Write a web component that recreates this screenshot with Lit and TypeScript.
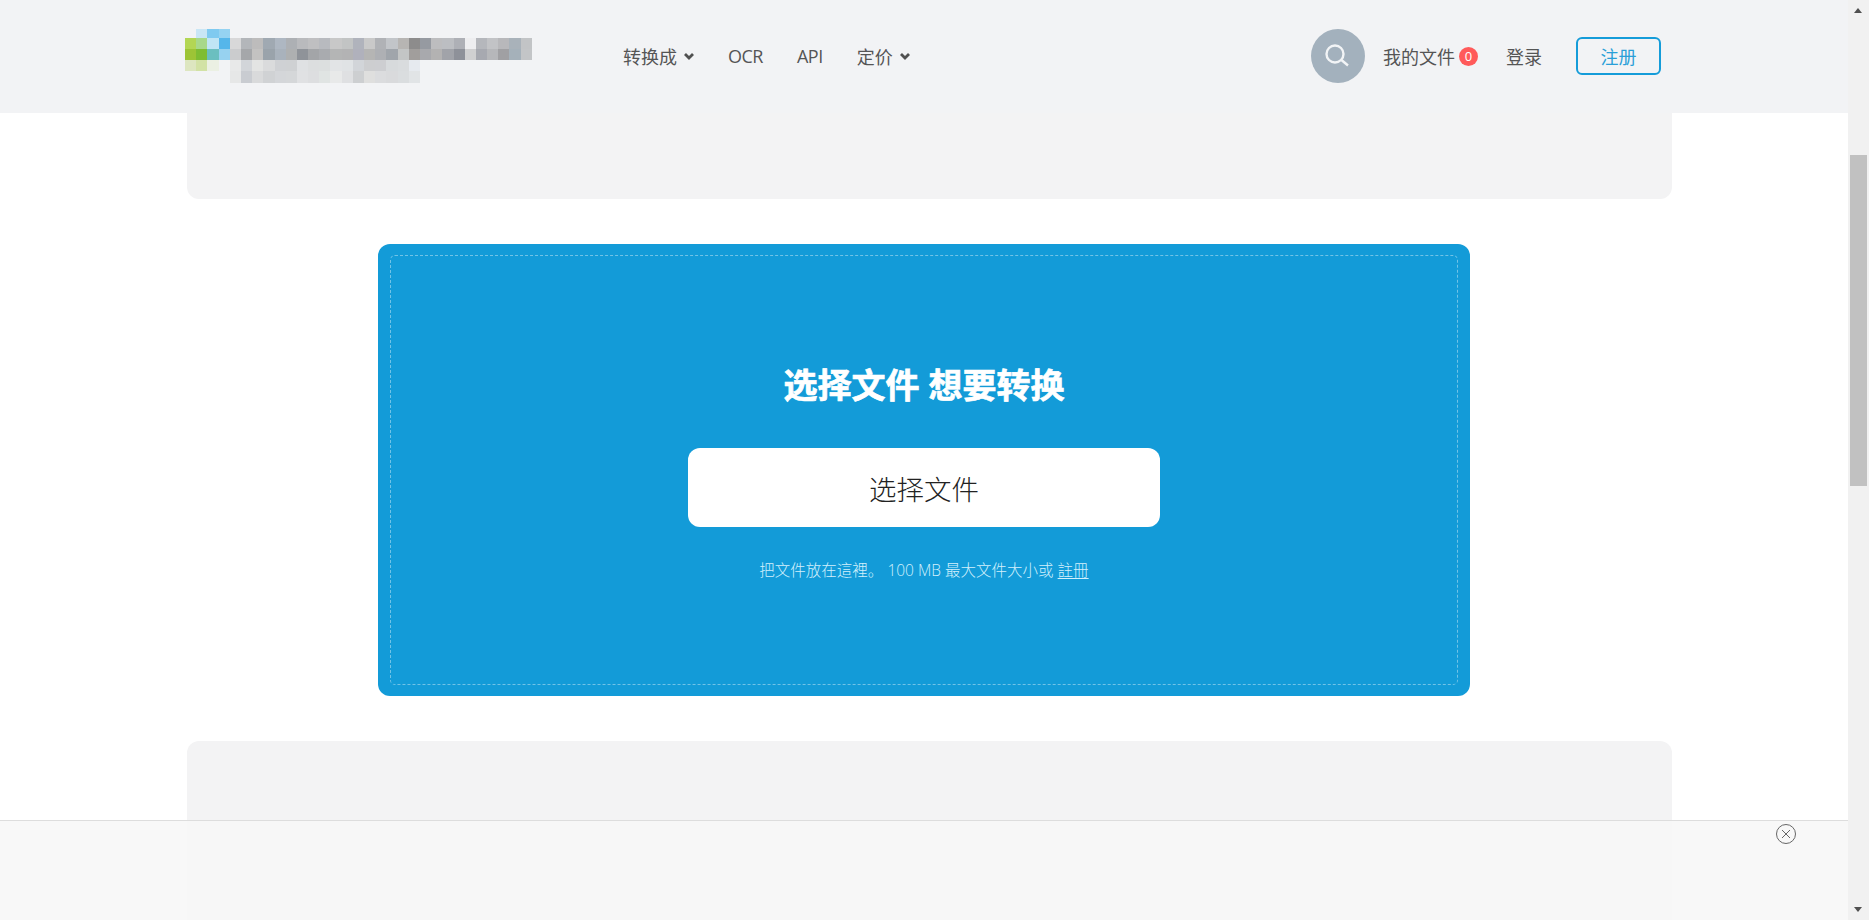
import { LitElement, html, css } from "lit";
import { customElement } from "lit/decorators.js";

// pixelated logo, each row starts at the given column
const LOGO: { row: number; col: number; colors: string[] }[] = [
  { row: 1, col: 2, colors: ["c9e6f5", "7fcaf0", "95d3f2"] },
  {
    row: 2,
    col: 1,
    colors: "b3d654 a8d88a c0e5f5 55b6ea d8d8d9 b3b6ba bdbcbc a0a9b2 aeb7c2 adb0b4 b9babd bfbfc1 b8babf c8c8c8 c2c4c4 b0b3bc c9c9c9 b0b2b6 c2c5c9 b7b5b3 8d8c8c 969aa1 bdbdbf bcbec2 aeb0b6 eeeef0 b5b7bc c2c3c6 b8b8bb a9b2ba c2c4c6".split(" "),
  },
  {
    row: 3,
    col: 1,
    colors: "9dc436 7ebd33 6bbfc0 97d2f0 cbccce a5a7aa c3c2c1 9aa3ab a9b2bc aeb0b1 8f9399 a3a5a8 a9abaf b4b5b5 b3b3b4 b0b1bc b5b5b4 aeb0b4 a0a5ab c3c5c5 a19e9c a8a9ad b3b2b2 a1a3a9 8e9199 d0d0d1 a7a9b0 b6b7ba a0a0a3 a5b1ba c3c5c7".split(" "),
  },
  {
    row: 4,
    col: 1,
    colors: "dde6c0 d2e2a5 ebf0e3 f2f3f5 e8e9e9 d2d5d9 e3e4e3 dadbdc cfd1d4 cfd1d3 dfe1e3 dcdedf dcdfdf e2e4e6 e0e3e5 d2d5d9 cdced0 cdced1 d7dadc d9dcde e6eaef".split(" "),
  },
  {
    row: 5,
    col: 5,
    colors: "e6e7e7 c9ccd1 d9dadb d0d2d4 d4d6d9 d5d7d9 e0e1e3 dddee0 e0e4e3 e8e9e9 dfe0e2 cdcfd1 dfdfde dbdcde d9dadc dadddf e1e4e6".split(" "),
  },
];

const chevron = html`<svg class="chev" width="10" height="7" viewBox="0 0 10 7">
  <path d="M1 1 L5 5 L9 1" fill="none" stroke="#505050" stroke-width="2.8" />
</svg>`;

@customElement("app-root")
export class AppRoot extends LitElement {
  static styles = css`
    :host {
      display: flex;
      height: 920px;
      overflow: hidden;
      background: #fff;
      font-family: "Open Sans", "Noto Sans CJK SC", sans-serif;
      color: #555;
    }
    .page {
      position: relative;
      flex: 1;
      min-width: 0;
      overflow: hidden;
    }
    header {
      display: flex;
      align-items: center;
      box-sizing: border-box;
      height: 113px;
      padding: 0 187px 1px 185px;
      background: #f2f3f5;
      font-size: 18px;
    }
    .logo {
      display: grid;
      flex: none;
      grid-template-columns: repeat(31, 11.2px);
      grid-template-rows: 9px 11px 11px 11px 12px;
      width: 348px;
    }
    nav {
      display: flex;
      align-items: center;
      margin-left: 90px;
    }
    nav a {
      display: flex;
      align-items: center;
      gap: 7px;
      margin-right: 34px;
    }
    nav a.latin {
      letter-spacing: -0.5px;
    }
    .right {
      display: flex;
      align-items: center;
      margin-left: auto;
    }
    .search {
      width: 54px;
      height: 54px;
      border-radius: 50%;
      background: #a3b1bd;
      margin-right: 18px;
    }
    .search svg {
      display: block;
    }
    .files {
      display: flex;
      align-items: center;
      gap: 4px;
      margin-right: 28px;
    }
    .badge {
      display: flex;
      align-items: center;
      justify-content: center;
      width: 19px;
      height: 19px;
      border-radius: 50%;
      background: #ff5a5a;
      color: #fff;
      font-size: 13px;
    }
    .signup {
      display: flex;
      align-items: center;
      justify-content: center;
      box-sizing: border-box;
      width: 85px;
      height: 38px;
      margin-left: 34px;
      border: 2px solid #159cd9;
      border-radius: 6px;
      color: #2a9fd8;
    }
    .ad {
      background: #f3f3f4;
      width: 1485px;
      margin-left: 187px;
    }
    .ad.top {
      height: 86px;
      border-radius: 0 0 12px 12px;
    }
    .ad.bottom {
      height: 179px;
      margin-top: 45px;
      border-radius: 12px 12px 0 0;
    }
    .upload {
      box-sizing: border-box;
      width: 1092px;
      height: 452px;
      margin: 45px auto 0;
      padding: 11px 12px;
      border-radius: 12px;
      background: #139bd8;
    }
    .dashed {
      box-sizing: border-box;
      display: flex;
      flex-direction: column;
      align-items: center;
      height: 100%;
      padding-top: 104px;
      border: 1px dashed rgba(255, 255, 255, 0.4);
      border-radius: 5px;
    }
    h1 {
      margin: 0;
      font-size: 34px;
      line-height: 50px;
      font-weight: 700;
      color: #fff;
      -webkit-text-stroke: 0.7px #fff;
    }
    .pick {
      display: flex;
      align-items: center;
      justify-content: center;
      width: 472px;
      height: 79px;
      margin-top: 38px;
      border-radius: 12px;
      background: #fff;
      color: #222;
      font-size: 27.5px;
      font-weight: 300;
    }
    .hint {
      margin-top: 30px;
      font-size: 15.5px;
      font-weight: 300;
      line-height: 26px;
      color: #d2f0fc;
    }
    .hint u {
      text-underline-offset: 2px;
    }
    .stick {
      position: absolute;
      left: 0;
      right: 0;
      bottom: 0;
      height: 99px;
      border-top: 1px solid #ddd;
      background: rgba(247, 247, 247, 0.9);
    }
    .close {
      position: absolute;
      left: 1776px;
      top: 3px;
      display: block;
    }
    .scrollbar {
      position: relative;
      flex: none;
      width: 21px;
      background: #f1f1f1;
    }
    .thumb {
      position: absolute;
      left: 2px;
      top: 155px;
      width: 17px;
      height: 331px;
      background: #c1c1c1;
    }
    .arrow {
      position: absolute;
      left: 6px;
      width: 0;
      height: 0;
      border-left: 4.5px solid transparent;
      border-right: 4.5px solid transparent;
    }
    .arrow.up {
      top: 8px;
      border-bottom: 5px solid #505050;
    }
    .arrow.down {
      bottom: 8px;
      border-top: 5px solid #505050;
    }
  `;

  render() {
    return html`
      <div class="page">
        <header>
          <div class="logo">
            ${LOGO.map((r) =>
              r.colors.map(
                (c, i) =>
                  html`<span style="grid-row:${r.row};grid-column:${r.col + i};background:#${c}"></span>`
              )
            )}
          </div>
          <nav>
            <a>转换成 ${chevron}</a>
            <a class="latin">OCR</a>
            <a class="latin">API</a>
            <a>定价 ${chevron}</a>
          </nav>
          <div class="right">
            <div class="search">
              <svg width="54" height="54" viewBox="0 0 54 54">
                <circle cx="24" cy="25" r="8.5" fill="none" stroke="#f2f4f6" stroke-width="2.4" />
                <path d="M30.5 31 L37 36.5" stroke="#f2f4f6" stroke-width="2.4" />
              </svg>
            </div>
            <div class="files">我的文件 <span class="badge">0</span></div>
            <a>登录</a>
            <a class="signup">注册</a>
          </div>
        </header>
        <div class="ad top"></div>
        <section class="upload">
          <div class="dashed">
            <h1>选择文件 想要转换</h1>
            <div class="pick">选择文件</div>
            <div class="hint">把文件放在這裡。 100 MB 最大文件大小或 <u>註冊</u></div>
          </div>
        </section>
        <div class="ad bottom"></div>
        <div class="stick">
          <svg class="close" width="20" height="20" viewBox="0 0 20 20">
            <circle cx="10" cy="10" r="9.5" fill="none" stroke="#666" />
            <path d="M6 6 L14 14 M14 6 L6 14" stroke="#666" />
          </svg>
        </div>
      </div>
      <div class="scrollbar">
        <div class="arrow up"></div>
        <div class="thumb"></div>
        <div class="arrow down"></div>
      </div>
    `;
  }
}
